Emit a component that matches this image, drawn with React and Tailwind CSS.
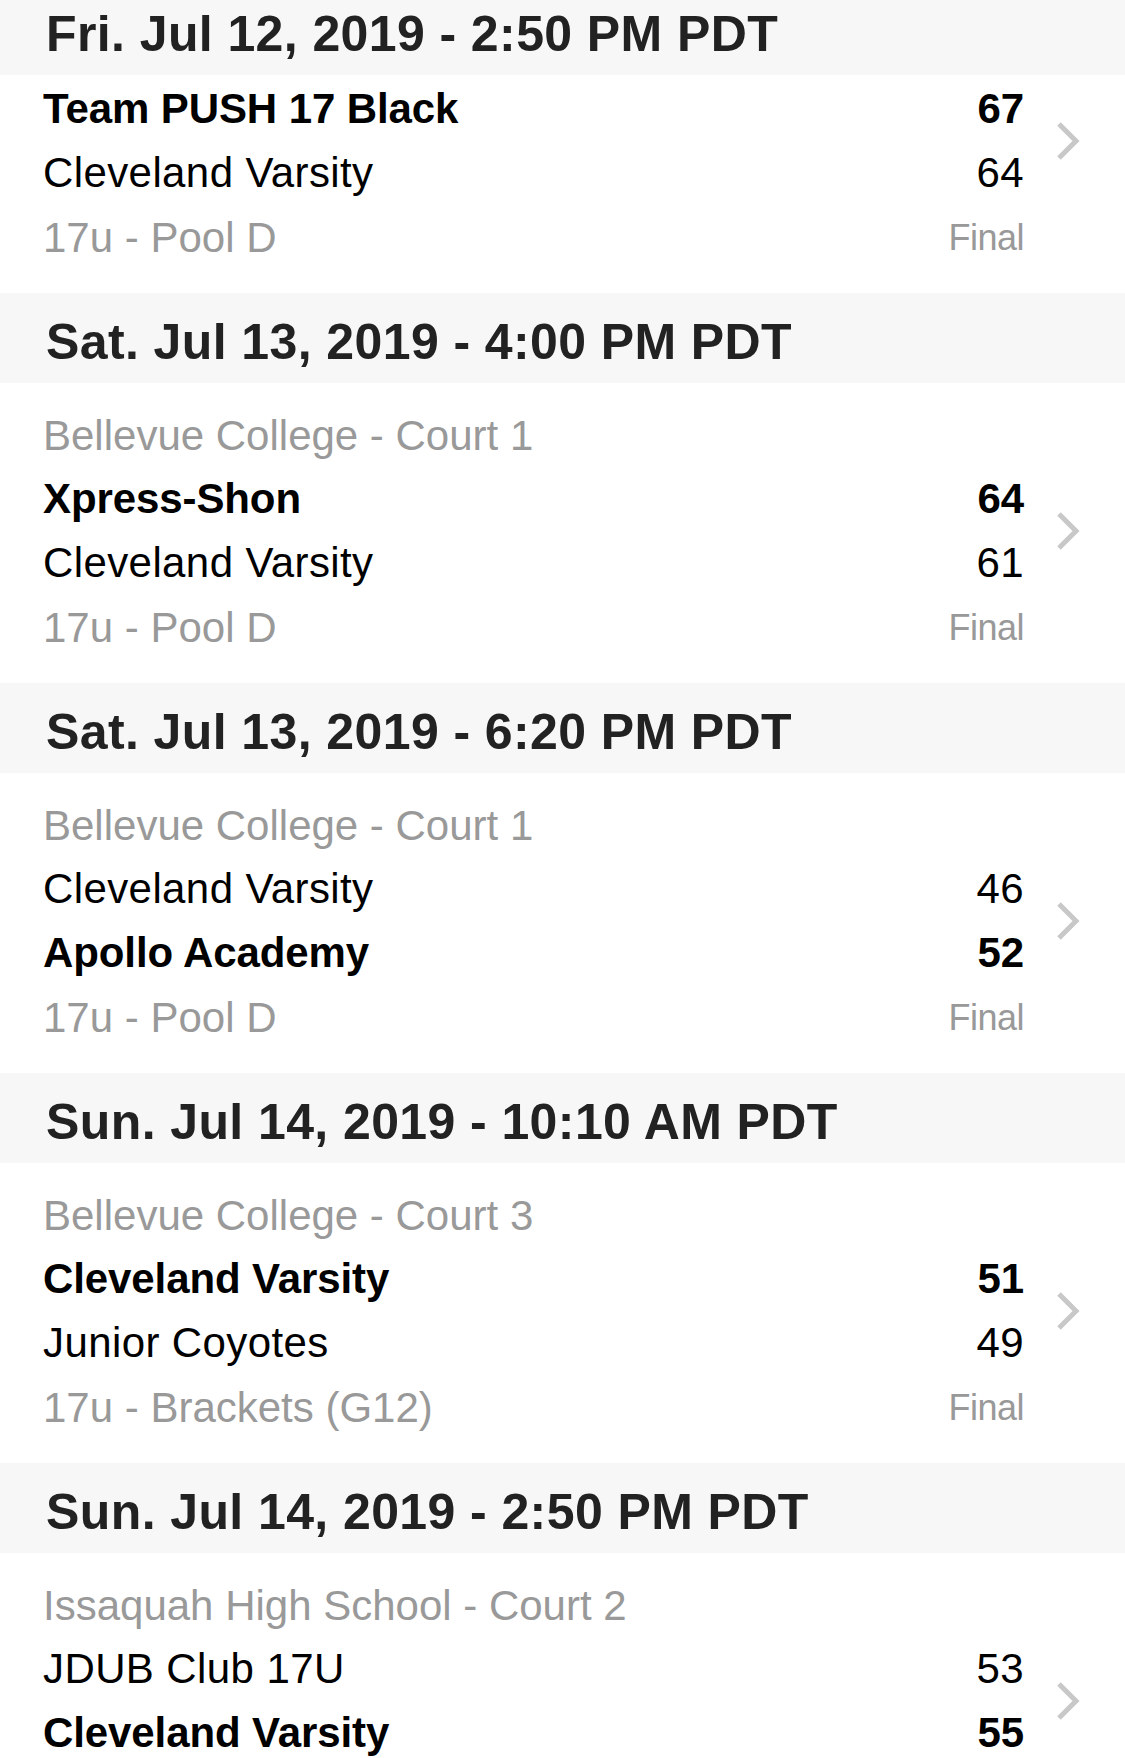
import React from "react";

const games = [
  {
    date: "Fri. Jul 12, 2019 - 2:50 PM PDT",
    first: true,
    teams: [
      { name: "Team PUSH 17 Black", score: 67, win: true },
      { name: "Cleveland Varsity", score: 64 },
    ],
    division: "17u - Pool D",
  },
  {
    date: "Sat. Jul 13, 2019 - 4:00 PM PDT",
    venue: "Bellevue College - Court 1",
    teams: [
      { name: "Xpress-Shon", score: 64, win: true },
      { name: "Cleveland Varsity", score: 61 },
    ],
    division: "17u - Pool D",
  },
  {
    date: "Sat. Jul 13, 2019 - 6:20 PM PDT",
    venue: "Bellevue College - Court 1",
    teams: [
      { name: "Cleveland Varsity", score: 46 },
      { name: "Apollo Academy", score: 52, win: true },
    ],
    division: "17u - Pool D",
  },
  {
    date: "Sun. Jul 14, 2019 - 10:10 AM PDT",
    venue: "Bellevue College - Court 3",
    teams: [
      { name: "Cleveland Varsity", score: 51, win: true },
      { name: "Junior Coyotes", score: 49 },
    ],
    division: "17u - Brackets (G12)",
  },
  {
    date: "Sun. Jul 14, 2019 - 2:50 PM PDT",
    venue: "Issaquah High School - Court 2",
    teams: [
      { name: "JDUB Club 17U", score: 53 },
      { name: "Cleveland Varsity", score: 55, win: true },
    ],
    division: "17u - Pool D",
  },
];

function Chevron() {
  return (
    <svg width="24" height="40" viewBox="0 0 24 40" fill="none">
      <polyline
        points="3,3 20,20 3,37"
        stroke="#c8c8c8"
        strokeWidth="5"
        strokeLinejoin="miter"
      />
    </svg>
  );
}

function GameSection({ game }) {
  return (
    <section>
      {/* date header */}
      <div
        className={
          game.first
            ? "h-[75px] pt-[4px] pl-[46px] bg-[#f7f7f7]"
            : "h-[90px] pt-[19px] pl-[46px] bg-[#f7f7f7]"
        }
      >
        <h2 className="text-[50px] leading-[1.2] font-bold text-[#222222] tracking-[0.4px]">
          {game.date}
        </h2>
      </div>

      <div
        className={
          game.first
            ? "bg-white pl-[43px] pt-[2px] pb-[22px]"
            : "bg-white pl-[43px] pt-[22px] pb-[22px]"
        }
      >
        {game.venue && (
          <div className="h-[62px] leading-[62px] text-[42px] text-[#999999]">
            {game.venue}
          </div>
        )}

        <div className="flex items-center">
          <div className="flex-1">
            {game.teams.map((t, i) => (
              <div
                key={i}
                className={
                  t.win
                    ? "flex justify-between h-[64px] leading-[64px] text-[42px] font-bold text-black tracking-[-0.1px]"
                    : "flex justify-between h-[64px] leading-[64px] text-[42px] text-black tracking-[0.4px]"
                }
              >
                <span>{t.name}</span>
                <span>{t.score}</span>
              </div>
            ))}
          </div>
          <div className="w-[101px] pl-[32px] flex items-center">
            <Chevron />
          </div>
        </div>

        <div className="flex justify-between h-[66px] leading-[66px] text-[42px] text-[#999999] pr-[101px]">
          <span>{game.division}</span>
          <span className="text-[36px] tracking-[-0.5px]">Final</span>
        </div>
      </div>
    </section>
  );
}

export default function App() {
  return (
    <div
      className="w-full h-[1758px] overflow-hidden bg-white"
      style={{ fontFamily: '"Liberation Sans", Arial, sans-serif' }}
    >
      {games.map((g, i) => (
        <GameSection key={i} game={g} />
      ))}
    </div>
  );
}
